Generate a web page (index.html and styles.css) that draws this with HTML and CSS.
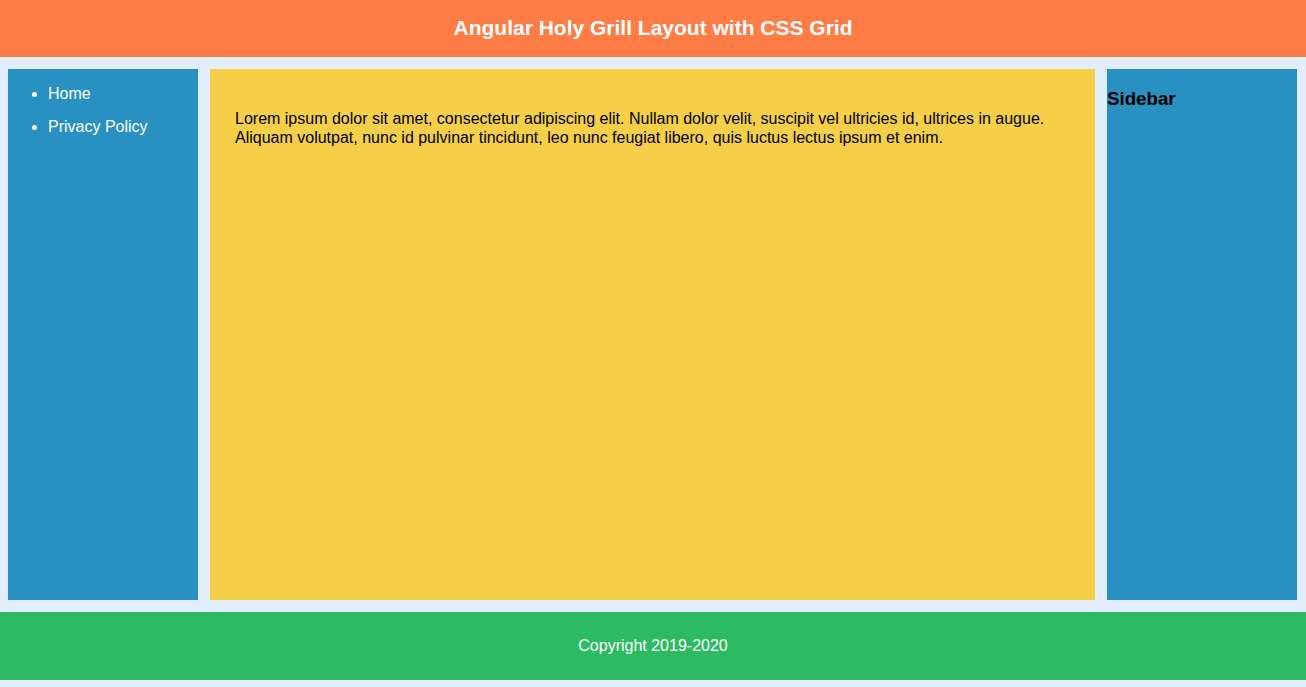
FILE: index.html
```html
<!DOCTYPE html>
<html>
<head>
<meta charset="utf-8">
<title>Angular Holy Grill Layout</title>
<link rel="stylesheet" href="styles.css">
</head>
<body>
<div class="layout">
  <header class="header"><h1 class="title">Angular Holy Grill Layout with CSS Grid</h1></header>
  <nav class="nav">
    <ul class="nav-list">
      <li>Home</li>
      <li>Privacy Policy</li>
    </ul>
  </nav>
  <main class="content">
    <p class="content-text">Lorem ipsum dolor sit amet, consectetur adipiscing elit. Nullam dolor velit, suscipit vel ultricies id, ultrices in augue. Aliquam volutpat, nunc id pulvinar tincidunt, leo nunc feugiat libero, quis luctus lectus ipsum et enim.</p>
  </main>
  <aside class="sidebar"><h3 class="sidebar-title">Sidebar</h3></aside>
  <footer class="footer">Copyright 2019-2020</footer>
</div>
</body>
</html>
```
FILE: styles.css
```css
html, body {
  margin: 0;
  padding: 0;
  background: #e3eefd;
  font-family: "Liberation Sans", Arial, sans-serif;
}
.layout {
  display: grid;
  height: 680px;
  grid-template-columns: 8px 190px 12px 1fr 12px 190px 9px;
  grid-template-rows: 57px 12px 1fr 12px 68px;
  grid-template-areas:
    "h h h h h h h"
    ". . . . . . ."
    ". n . c . s ."
    ". . . . . . ."
    "f f f f f f f";
}
.header {
  grid-area: h;
  background: #fe7c46;
  display: flex;
  align-items: center;
  justify-content: center;
  padding-bottom: 2px;
}
.title {
  margin: 0;
  color: #fff;
  font-size: 21px;
  font-weight: bold;
}
.nav {
  grid-area: n;
  background: #2991c1;
  color: #fff;
  font-size: 16px;
}
.nav-list {
  margin: 16px 0 0;
  padding-left: 40px;
}
.nav-list li {
  line-height: 18px;
  margin-bottom: 15px;
}
.content {
  grid-area: c;
  background: #f4cf47;
  padding: 24px 25px;
  color: #000;
  font-size: 16px;
}
.content-text {
  margin: 16px 0;
  line-height: 19px;
}
.sidebar {
  grid-area: s;
  background: #2991c1;
}
.sidebar-title {
  margin: 19px 0;
  font-size: 18.72px;
  color: #000;
}
.footer {
  grid-area: f;
  background: #2cbb63;
  color: #fff;
  font-size: 16px;
  display: flex;
  align-items: center;
  justify-content: center;
}
```
